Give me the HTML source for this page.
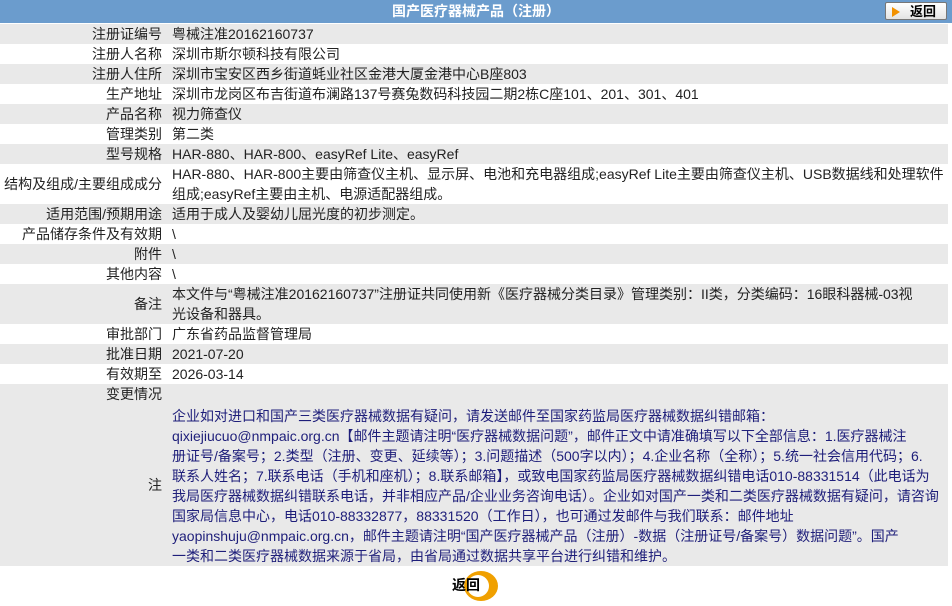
<!DOCTYPE html>
<html><head><meta charset="utf-8"><style>
body{margin:0;width:952px;height:604px;overflow:hidden;background:#fff;font-family:"Liberation Sans","Noto Sans CJK SC",sans-serif;font-size:14px;color:#222}
.hd{position:relative;height:23px;background:#6b9ccd;color:#fff;font-weight:bold;text-align:center;line-height:23px;font-size:14px}
.bk{position:absolute;right:5px;top:2px;width:62px;height:18px;background:linear-gradient(#fff,#e4e4e4);border:1px solid #777;border-radius:2px;color:#000;font-size:13px;line-height:18px;box-sizing:border-box}
.bk b{position:absolute;left:6px;top:4px;width:0;height:0;border-left:8px solid #f29100;border-top:5px solid transparent;border-bottom:5px solid transparent}
.bk span{position:absolute;left:24px;top:0}
table{border-collapse:collapse;width:948px;margin-top:1px}
td{padding:0;line-height:20px;vertical-align:middle;white-space:nowrap}
td.l{width:162px;text-align:right;padding-right:10px}
tr.g td{background:#e9e9e9}
.blue{color:#1e1e7a;padding-top:2px}
.foot{position:relative;height:40px}
.rb{position:absolute;left:452px;top:9px;font-weight:bold;font-size:14px;color:#000}
.rc{position:absolute;left:464px;top:5px;width:34px;height:30px;border-radius:50%;background:#f0a000}
.rc i{position:absolute;left:3px;top:4px;width:22px;height:22px;border-radius:50%;background:#fff}
</style></head><body>
<div class="hd">国产医疗器械产品（注册）<div class="bk"><b></b><span>返回</span></div></div>
<table>
<tr class="g"><td class="l">注册证编号</td><td>粤械注准20162160737</td></tr>
<tr><td class="l">注册人名称</td><td>深圳市斯尔顿科技有限公司</td></tr>
<tr class="g"><td class="l">注册人住所</td><td>深圳市宝安区西乡街道蚝业社区金港大厦金港中心B座803</td></tr>
<tr><td class="l">生产地址</td><td>深圳市龙岗区布吉街道布澜路137号赛兔数码科技园二期2栋C座101、201、301、401</td></tr>
<tr class="g"><td class="l">产品名称</td><td>视力筛查仪</td></tr>
<tr><td class="l">管理类别</td><td>第二类</td></tr>
<tr class="g"><td class="l">型号规格</td><td>HAR-880、HAR-800、easyRef Lite、easyRef</td></tr>
<tr><td class="l">结构及组成/主要组成成分</td><td>HAR-880、HAR-800主要由筛查仪主机、显示屏、电池和充电器组成;easyRef Lite主要由筛查仪主机、USB数据线和处理软件<br>组成;easyRef主要由主机、电源适配器组成。</td></tr>
<tr class="g"><td class="l">适用范围/预期用途</td><td>适用于成人及婴幼儿屈光度的初步测定。</td></tr>
<tr><td class="l">产品储存条件及有效期</td><td>\</td></tr>
<tr class="g"><td class="l">附件</td><td>\</td></tr>
<tr><td class="l">其他内容</td><td>\</td></tr>
<tr class="g"><td class="l">备注</td><td>本文件与“粤械注准20162160737”注册证共同使用新《医疗器械分类目录》管理类别：II类，分类编码：16眼科器械-03视<br>光设备和器具。</td></tr>
<tr><td class="l">审批部门</td><td>广东省药品监督管理局</td></tr>
<tr class="g"><td class="l">批准日期</td><td>2021-07-20</td></tr>
<tr><td class="l">有效期至</td><td>2026-03-14</td></tr>
<tr class="g"><td class="l">变更情况</td><td></td></tr>
<tr class="g"><td class="l">注</td><td class="blue">企业如对进口和国产三类医疗器械数据有疑问，请发送邮件至国家药监局医疗器械数据纠错邮箱：<br>qixiejiucuo@nmpaic.org.cn【邮件主题请注明“医疗器械数据问题”，邮件正文中请准确填写以下全部信息：1.医疗器械注<br>册证号/备案号；2.类型（注册、变更、延续等）；3.问题描述（500字以内）；4.企业名称（全称）；5.统一社会信用代码；6.<br>联系人姓名；7.联系电话（手机和座机）；8.联系邮箱】，或致电国家药监局医疗器械数据纠错电话010-88331514（此电话为<br>我局医疗器械数据纠错联系电话，并非相应产品/企业业务咨询电话）。企业如对国产一类和二类医疗器械数据有疑问，请咨询<br>国家局信息中心，电话010-88332877，88331520（工作日），也可通过发邮件与我们联系：邮件地址<br>yaopinshuju@nmpaic.org.cn，邮件主题请注明“国产医疗器械产品（注册）-数据（注册证号/备案号）数据问题”。国产<br>一类和二类医疗器械数据来源于省局，由省局通过数据共享平台进行纠错和维护。</td></tr>
</table>
<div class="foot"><div class="rc"><i></i></div><div class="rb">返回</div></div>
</body></html>
